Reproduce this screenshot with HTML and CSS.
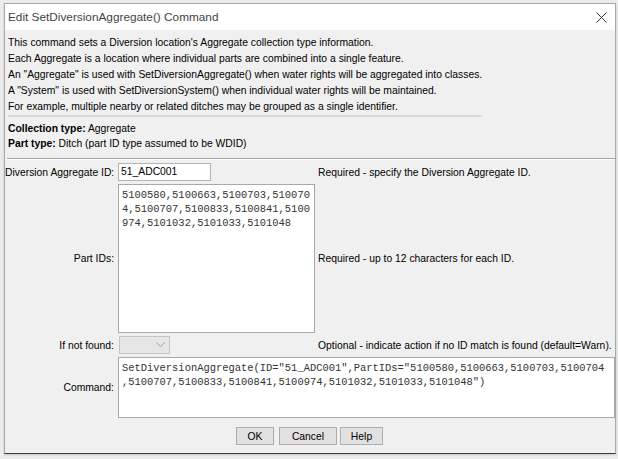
FILE: index.html
```html
<!DOCTYPE html>
<html>
<head>
<meta charset="utf-8">
<title>Edit SetDiversionAggregate() Command</title>
<link rel="stylesheet" href="styles.css">
</head>
<body>
<div class="desk">
  <div class="window">
    <div class="titlebar">
      <span class="title">Edit SetDiversionAggregate() Command</span>
      <svg class="close" width="11" height="11" viewBox="0 0 11 11"><path d="M0.5 0.5L10.5 10.5M10.5 0.5L0.5 10.5" stroke="#333" stroke-width="1" fill="none"/></svg>
    </div>
    <div class="content">
      <div class="intro">
        <p>This command sets a Diversion location's Aggregate collection type information.</p>
        <p>Each Aggregate is a location where individual parts are combined into a single feature.</p>
        <p>An "Aggregate" is used with SetDiversionAggregate() when water rights will be aggregated into classes.</p>
        <p>A "System" is used with SetDiversionSystem() when individual water rights will be maintained.</p>
        <p>For example, multiple nearby or related ditches may be grouped as a single identifier.</p>
      </div>
      <div class="meta">
        <p><b>Collection type:</b> Aggregate</p>
        <p><b>Part type:</b> Ditch (part ID type assumed to be WDID)</p>
      </div>
      <div class="sep"></div>
      <div class="form">
        <div class="label">Diversion Aggregate ID:</div>
        <div class="cell"><div class="textfield">51_ADC001</div></div>
        <div class="note">Required - specify the Diversion Aggregate ID.</div>

        <div class="label">Part IDs:</div>
        <div class="cell"><div class="textarea parts">5100580,5100663,5100703,510070
4,5100707,5100833,5100841,5100
974,5101032,5101033,5101048</div></div>
        <div class="note">Required - up to 12 characters for each ID.</div>

        <div class="label">If not found:</div>
        <div class="cell"><div class="combo"><svg class="chev" width="9" height="6" viewBox="0 0 9 6"><path d="M0.5 0.5L4.5 4.5L8.5 0.5" stroke="#9a9a9a" stroke-width="1" fill="none"/></svg></div></div>
        <div class="note">Optional - indicate action if no ID match is found (default=Warn).</div>

        <div class="label">Command:</div>
        <div class="cell wide"><div class="textarea command">SetDiversionAggregate(ID="51_ADC001",PartIDs="5100580,5100663,5100703,5100704
,5100707,5100833,5100841,5100974,5101032,5101033,5101048")</div></div>
      </div>
      <div class="buttons">
        <button class="btn ok">OK</button>
        <button class="btn cancel">Cancel</button>
        <button class="btn help">Help</button>
      </div>
    </div>
  </div>
</div>
</body>
</html>
```

FILE: styles.css
```css
* { box-sizing: border-box; }
html, body { margin: 0; padding: 0; }
body {
  background: #ececec;
  font-family: "Liberation Sans", Arial, sans-serif;
  width: 618px;
  height: 459px;
  overflow: hidden;
}
.desk {
  padding: 3px 2px 0 4px;
}
.window {
  width: 612px;
  height: 451px;
  border: 1px solid #a8a8a8;
  border-bottom: 1px solid #3c3c3c;
  background: #f0f0f0;
  display: flex;
  flex-direction: column;
  box-shadow: 0 1px 2px rgba(0,0,0,0.15);
}
.titlebar {
  height: 26px;
  background: #ffffff;
  display: flex;
  align-items: center;
  justify-content: space-between;
  padding: 0 8px 0 3px;
  flex: none;
}
.title {
  font-size: 11.8px;
  color: #444;
}
.close { display: block; margin-top: 1px; }
.content {
  flex: 1;
  padding: 5px 0 0 0;
  font-size: 10.35px;
  color: #000;
  display: flex;
  flex-direction: column;
}
.intro {
  width: fit-content;
  margin-left: 3px;
  border-bottom: 2px solid #dadada;
}
.intro p, .meta p {
  margin: 0;
  line-height: 16px;
  white-space: nowrap;
}
.meta {
  margin: 4px 0 0 3px;
}
.meta p { line-height: 15px; }
.sep {
  margin: 7px 0 0 2px;
  width: 608px;
  border-top: 1px solid #a0a0a0;
  border-bottom: 1px solid #ffffff;
}
.form {
  margin-top: 3px;
  display: grid;
  grid-template-columns: 113px 200px 1fr;
  row-gap: 3px;
  align-items: center;
}
.label {
  text-align: right;
  padding-right: 4px;
  white-space: nowrap;
}
.note {
  white-space: nowrap;
}
.cell.wide { grid-column: 2 / 4; }
.textfield {
  width: 93px;
  height: 18px;
  background: #fff;
  border: 1px solid #b4b4b4;
  padding: 0 2px;
  line-height: 16px;
}
.textarea {
  background: #fff;
  border: 1px solid #a9a9a9;
  font-family: "Liberation Mono", "Courier New", monospace;
  font-size: 10.45px;
  line-height: 14px;
  white-space: pre;
  overflow: hidden;
  padding: 3px 3px;
  color: #333;
}
.parts {
  width: 197px;
  height: 149px;
}
.command {
  width: 497px;
  height: 61px;
}
.combo {
  width: 51px;
  height: 18px;
  margin-left: 1px;
  background: #e6e6e6;
  border: 1px solid #c4c4c4;
  display: flex;
  align-items: center;
  justify-content: flex-end;
  padding-right: 4px;
}
.chev { display: block; }
.buttons {
  margin-top: 9px;
  display: flex;
  justify-content: center;
  gap: 4px;
  padding-right: 1px;
}
.btn {
  font-family: "Liberation Sans", Arial, sans-serif;
  font-size: 10.35px;
  color: #000;
  background: #e1e1e1;
  border: 1px solid #adadad;
  height: 18px;
  padding: 0;
  margin: 0;
}
.ok { width: 38px; }
.cancel { width: 58px; margin-left: 1px; }
.help { width: 43px; margin-left: -1px; }
```
